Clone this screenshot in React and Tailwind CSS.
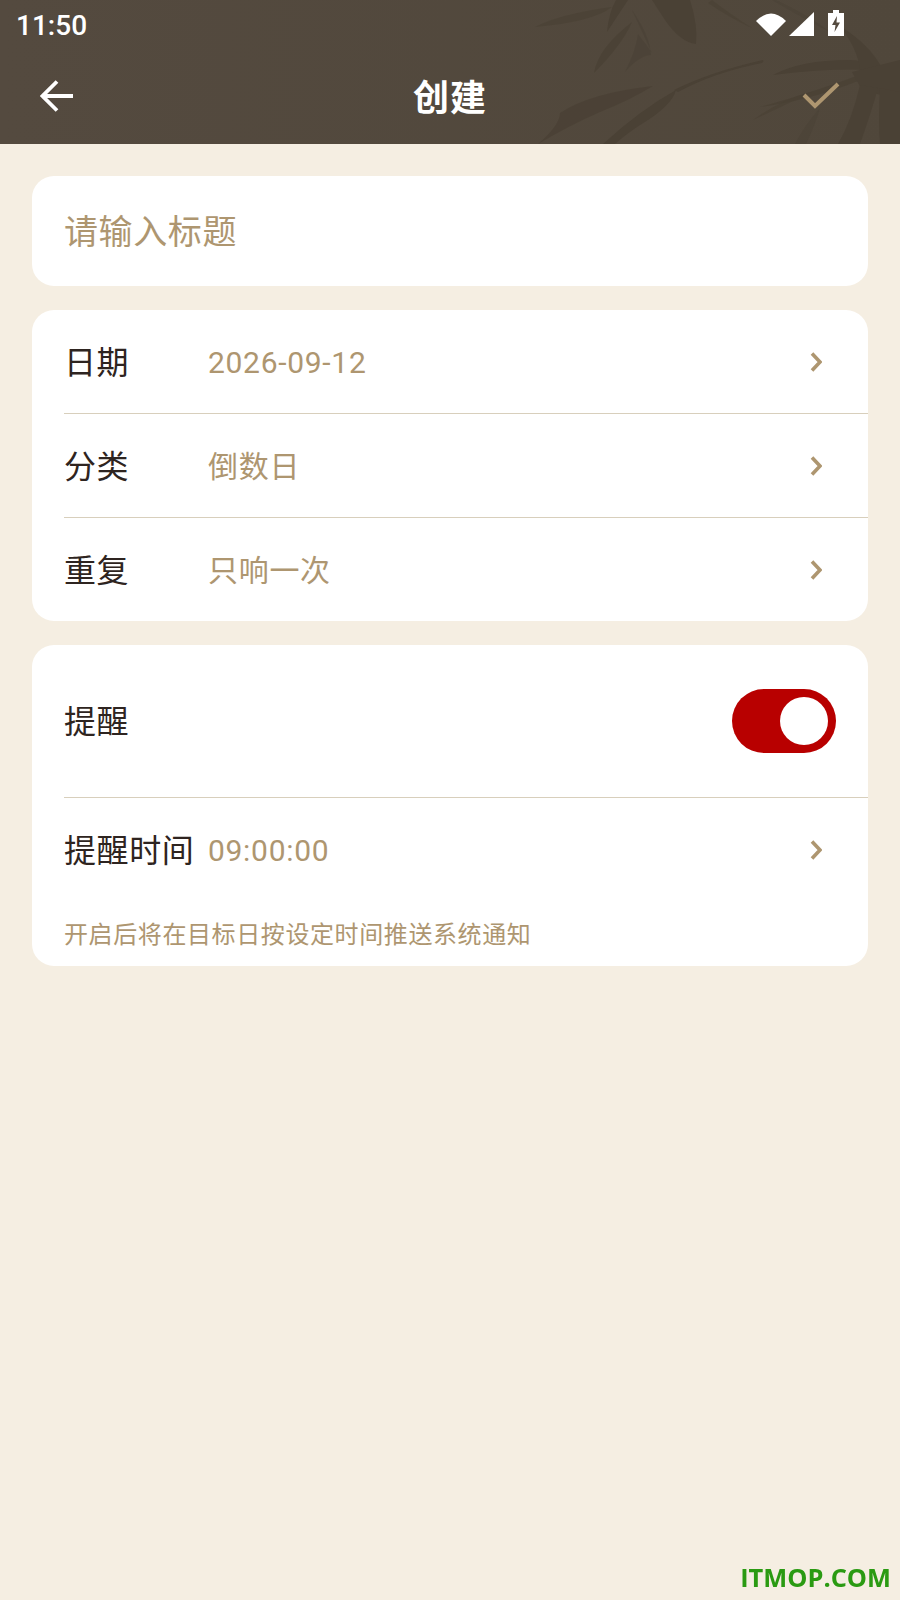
import React from "react";

const cjk = "font-['Roboto','Noto_Sans_CJK_SC',sans-serif]";

function Bamboo() {
  return (
    <svg className="absolute inset-0 h-full w-full" viewBox="0 0 900 144" fill="#4a4135">
      <path d="M535 27Q560 14 612 7Q592 22 535 27Z" opacity="0.7" />
      <path d="M607 32Q609 12 616 0L628 0Q618 15 607 32Z" />
      <path d="M594 73Q598 48 632 22Q622 45 594 73Z" opacity="0.8" />
      <path d="M625 72Q636 50 638 34Q646 44 652 53Q644 36 632 10Q650 36 651 55Q640 55 625 72Z" opacity="0.6" />
      <path d="M652 0L690 0Q698 25 696 44Q680 42 665 20Z" />
      <path d="M538 144Q560 125 560 113Q590 93 653 86Q630 100 600 112Q570 125 538 144Z" opacity="0.85" />
      <path d="M603 144Q640 110 676 90Q672 106 640 125Q625 135 615 144Z" />
      <path d="M674 90Q710 72 763 60Q764 62 762 63Q715 72 678 92Z" />
      <path d="M773 75Q800 60 850 60Q878 62 872 70Q830 68 773 75Z" />
      <path d="M760 107Q815 92 870 71L875 74Q815 100 760 107Z" opacity="0.8" />
      <path d="M753 120Q780 100 812 92Q785 105 753 120Z" opacity="0.7" />
      <path d="M840 26Q870 45 882 68Q900 75 900 90L860 78Q862 55 840 26Z" />
      <path d="M852 72L900 60L900 100L862 90Z" />
      <path d="M860 85Q852 120 838 144L860 144Q872 110 878 88Z" />
      <path d="M880 88Q878 120 880 144L900 144L900 92Z" />
      <path d="M820 108Q805 125 795 144L806 144Q815 125 820 108Z" opacity="0.5" />
      <path d="M712 0Q730 14 752 28Q730 18 708 3Z" opacity="0.7" />
      <path d="M776 0Q810 16 830 32Q806 20 772 0Z" opacity="0.5" />
    </svg>
  );
}

function Chevron() {
  return (
    <svg className="mr-[46px] ml-auto h-5 w-3 shrink-0" viewBox="0 0 12 20" fill="none" stroke="#ae9670" strokeWidth="3.6">
      <path d="M2 1.5L10 10L2 18.5" />
    </svg>
  );
}

function Row({ label, value, border, last }) {
  return (
    <div className={`ml-8 flex items-center ${last ? "h-[103px]" : "h-[104px]"} ${border ? "border-b border-[#d8cfbc]" : ""}`}>
      <span className="w-[144px] shrink-0 pt-0.5 text-[32px] leading-none tracking-[0.6px] text-[#2e2420]">{label}</span>
      <span className="pt-0.5 text-[30px] leading-none tracking-[0.7px] text-[#ae9670]">{value}</span>
      <Chevron />
    </div>
  );
}

export default function App() {
  return (
    <div className={`min-h-[1600px] w-[900px] bg-[#f5eee2] ${cjk}`}>
      <header className="relative h-[144px] overflow-hidden bg-linear-to-r from-[#544a3f] to-[#50473b]">
        <Bamboo />
        <div className="relative flex h-12 items-center pl-4 pt-1">
          <span className="text-[28px] font-medium leading-none text-white">11:50</span>
          <svg className="absolute left-[756px] top-[10px]" width="90" height="28" viewBox="756 10 90 28" fill="#fff">
            <path d="M756 21Q771 6 786 21L771 36Z" />
            <path d="M814 12V36H789Z" />
            <path d="M833 10H839V13H844V36H828V13H833Z" />
            <path d="M837 16L832 25H835.5L834.5 32L840 22.5H836.5Z" fill="#544a3f" />
          </svg>
        </div>
        <div className="relative flex h-24 items-center justify-between">
          <svg className="ml-10" width="33" height="32" viewBox="0 0 33 32" fill="none" stroke="#fff" strokeWidth="3.8">
            <path d="M2 16H33M17 1.5L2.5 16L17 30.5" />
          </svg>
          <h1 className="absolute left-0 right-0 pt-1.5 text-center text-[36px] font-bold leading-none tracking-[1px] text-white">创建</h1>
          <svg className="mr-[60px]" width="38" height="28" viewBox="0 0 38 28" fill="none" stroke="#ae9670" strokeWidth="4">
            <path d="M2 13L13 24L36 2" />
          </svg>
        </div>
      </header>

      <main className="flex flex-col gap-6 px-8 pt-8">
        <section className="flex h-[110px] items-center rounded-[22px] bg-white pl-8">
          <span className="pt-0.5 text-[34px] leading-none tracking-[0.6px] text-[#ae9670]">请输入标题</span>
        </section>

        <section className="rounded-[22px] bg-white">
          <Row label="日期" value="2026-09-12" border />
          <Row label="分类" value="倒数日" border />
          <Row label="重复" value="只响一次" last />
        </section>

        <section className="h-[321px] rounded-[22px] bg-white">
          <div className="ml-8 flex h-[153px] items-center border-b border-[#d8cfbc]">
            <span className="pt-0.5 text-[32px] leading-none tracking-[0.6px] text-[#2e2420]">提醒</span>
            <div className="ml-auto mr-8 flex h-16 w-[104px] items-center justify-end rounded-full bg-[#b80000] pr-2">
              <div className="h-12 w-12 rounded-full bg-white" />
            </div>
          </div>
          <Row label="提醒时间" value="09:00:00" />
          <p className="ml-8 mt-[18px] text-[24px] leading-[30px] tracking-[0.6px] text-[#ae9670]">开启后将在目标日按设定时间推送系统通知</p>
        </section>
      </main>

      <div className="fixed bottom-[10px] right-[9px] font-['Open_Sans',sans-serif] text-[25.4px] font-bold leading-none text-[#2a9a12]">ITMOP.COM</div>
    </div>
  );
}
